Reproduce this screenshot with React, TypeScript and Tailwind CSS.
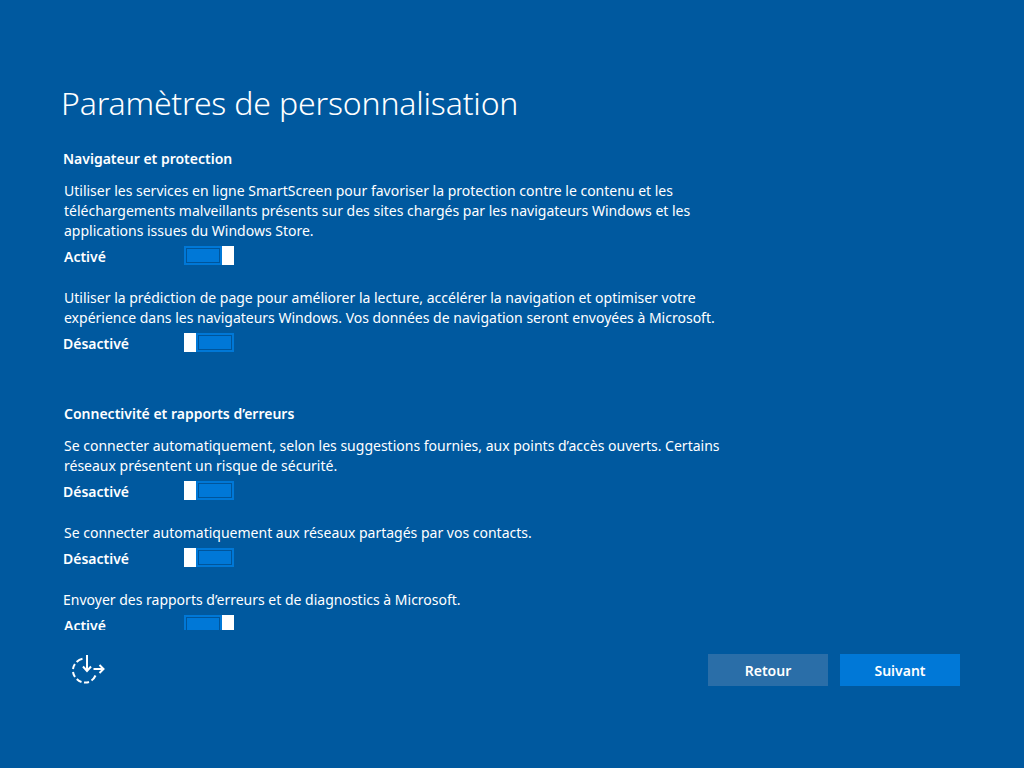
import React from "react";

function Toggle({ on }: { on: boolean }) {
  return (
    <div className={`flex w-[50px] h-[19px] ${on ? "flex-row" : "flex-row-reverse"}`}>
      <div className="flex-1 border-2 border-[#0078d7] bg-[#0078d7]">
        <div className="w-full h-full border border-[#00559b] bg-[#0078d7]" />
      </div>
      <div className="w-3 bg-white" />
    </div>
  );
}

function Row({ label, on }: { label: string; on: boolean }) {
  return (
    <div className="flex items-center h-[19px] mt-[5px]">
      <div className={`w-[121px] pt-[2px] text-[14px] font-semibold text-white ${on ? "pl-px" : ""}`}>{label}</div>
      <Toggle on={on} />
    </div>
  );
}

export default function App() {
  return (
    <div
      className="w-[1024px] h-[768px] bg-[#00599f] text-white overflow-hidden flex flex-col"
      style={{ fontFamily: '"Noto Sans", sans-serif' }}
    >
      <h1 className="ml-[61px] mt-[79px] h-[48px] leading-[48px] text-[32px] font-light tracking-[-0.17px] whitespace-nowrap">
        Paramètres de personnalisation
      </h1>
      <div className="ml-[63px] mt-[22px] h-[481px] overflow-hidden text-[14px] leading-[20px]">
        <h2 className="font-semibold h-[20px]">Navigateur et protection</h2>
        <p className="ml-[1px] mt-[12px] whitespace-nowrap">
          Utiliser les services en ligne SmartScreen pour favoriser la protection contre le contenu et les
          <br />
          téléchargements malveillants présents sur des sites chargés par les navigateurs Windows et les
          <br />
          applications issues du Windows Store.
        </p>
        <Row label="Activé" on />
        <p className="ml-[1px] mt-[23px] whitespace-nowrap">
          Utiliser la prédiction de page pour améliorer la lecture, accélérer la navigation et optimiser votre
          <br />
          expérience dans les navigateurs Windows. Vos données de navigation seront envoyées à Microsoft.
        </p>
        <Row label="Désactivé" on={false} />
        <h2 className="ml-[1px] mt-[52px] font-semibold h-[20px]">Connectivité et rapports d’erreurs</h2>
        <p className="ml-[1px] mt-[12px] whitespace-nowrap">
          Se connecter automatiquement, selon les suggestions fournies, aux points d’accès ouverts. Certains
          <br />
          réseaux présentent un risque de sécurité.
        </p>
        <Row label="Désactivé" on={false} />
        <p className="ml-[1px] mt-[23px] whitespace-nowrap">Se connecter automatiquement aux réseaux partagés par vos contacts.</p>
        <Row label="Désactivé" on={false} />
        <p className="mt-[23px] whitespace-nowrap">Envoyer des rapports d’erreurs et de diagnostics à Microsoft.</p>
        <Row label="Activé" on />
      </div>
      <div className="flex items-center ml-[70px] mr-[64px] mt-[24px]">
        <svg width="36" height="32" viewBox="0 0 36 32" fill="none" stroke="white" strokeWidth="2">
          <path d="M12.5 4.8A12 12 0 0 0 6.6 8M4.9 10A12 12 0 0 0 3 15M3 18A12 12 0 0 0 5 23M6.8 25A12 12 0 0 0 11.5 28M14 28.5A12 12 0 0 0 19 28M21.5 26.5A12 12 0 0 0 25.5 21.5" />
          <path d="M17 1V17" />
          <path d="M13 12.5L17 17L21 12.5" />
          <path d="M23.5 15H33" />
          <path d="M29.5 11L33.5 15L29.5 19" />
        </svg>
        <div className="flex gap-3 ml-auto">
          <button className="w-[120px] h-8 bg-[#2a6ea8] text-[14px] font-semibold">Retour</button>
          <button className="w-[120px] h-8 bg-[#0078d7] text-[14px] font-semibold">Suivant</button>
        </div>
      </div>
    </div>
  );
}
